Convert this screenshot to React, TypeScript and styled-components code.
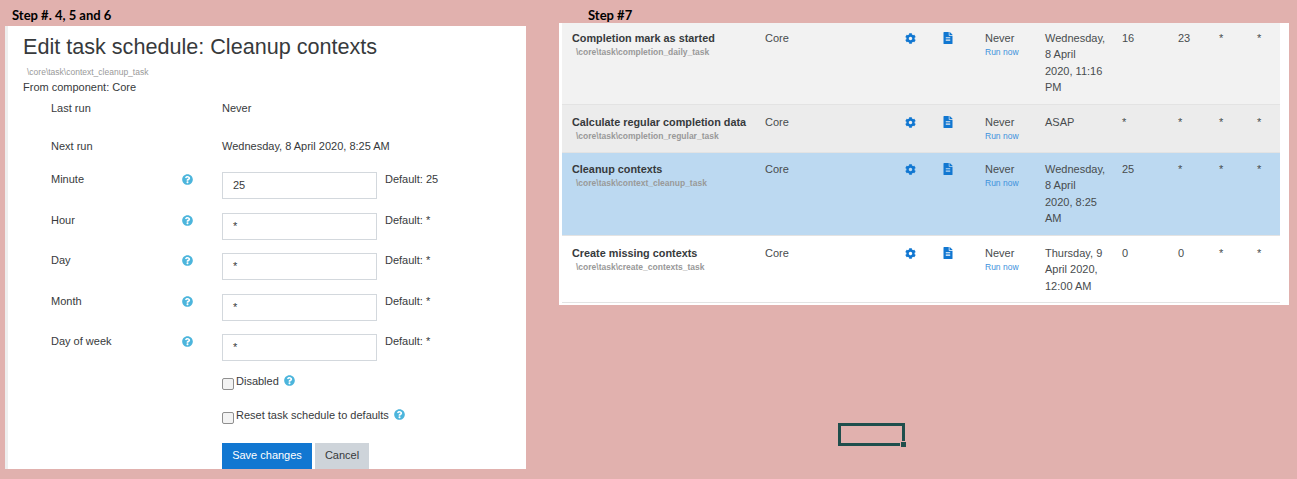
import React from 'react';
import { FaCog, FaFileAlt, FaQuestionCircle } from 'react-icons/fa';
import styled, { createGlobalStyle } from 'styled-components';

const GlobalStyle = createGlobalStyle`
  html, body {
    margin: 0;
    height: 479px;
    overflow: hidden;
    background: #e1b1ae;
    font-family: "Liberation Sans", Arial, sans-serif;
    font-size: 11px;
    color: #373a3c;
  }
`;

const Sheet = styled.div`
  position: relative;
  width: 1297px;
  height: 479px;
  display: flex;
  align-items: flex-start;
  padding-left: 5px;
  box-sizing: border-box;
  gap: 33px;
`;

const Column = styled.section<{ $width: number }>`
  width: ${(p) => p.$width}px;
  flex: none;
`;

const Caption = styled.div<{ $height: number; $indent: number }>`
  height: ${(p) => p.$height}px;
  padding-left: ${(p) => p.$indent}px;
  padding-top: 8px;
  box-sizing: border-box;
  font-family: Lato, "Open Sans", sans-serif;
  font-weight: 700;
  font-size: 13px;
  line-height: 15px;
  color: #000;
`;

const FormPanel = styled.div`
  height: 443px;
  overflow: hidden;
  background: #fff;
  border-left: 3px solid #eeeeee;
  padding-left: 15px;
  box-sizing: border-box;
`;

const Title = styled.h2`
  margin: 7px 0 0;
  font-size: 21.6px;
  line-height: 28px;
  font-weight: 400;
  color: #373a3c;
`;

const TaskPath = styled.div`
  margin: 5px 0 0 4px;
  font-size: 8.5px;
  line-height: 12px;
  color: #999;
`;

const Component = styled.div`
  line-height: 16px;
  margin-top: 1px;
`;

const StaticRow = styled.div<{ $height: number; $top?: number }>`
  display: grid;
  grid-template-columns: 171px 1fr;
  margin-left: 28px;
  height: ${(p) => p.$height}px;
  padding-top: ${(p) => p.$top ?? 0}px;
  box-sizing: border-box;
  line-height: 16px;
`;

const Fields = styled.div`
  display: flex;
  flex-direction: column;
  gap: 13.5px;
  margin-left: 28px;
`;

const FieldRow = styled.div`
  display: grid;
  grid-template-columns: 131px 40px 163px 1fr;
  height: 27px;
  line-height: 14px;
`;

const HelpCell = styled.span`
  padding-top: 2px;
  font-size: 11px;
  line-height: 0;
  color: #4cb5dc;
`;

const TextInput = styled.div`
  width: 155px;
  height: 27px;
  box-sizing: border-box;
  border: 1px solid #d3d8dd;
  background: #fff;
  padding: 4px 10px;
  line-height: 17px;
`;

const CheckRow = styled.label<{ $top: number }>`
  display: flex;
  align-items: flex-start;
  margin: ${(p) => p.$top}px 0 0 199px;
  height: 20px;
  line-height: 16px;
`;

const CheckBox = styled.span`
  flex: none;
  width: 12px;
  height: 12px;
  margin: 5px 2px 0 0;
  border: 1px solid #8f8f8f;
  border-radius: 2px;
  background: #f3f3f3;
  box-sizing: border-box;
`;

const InlineHelp = styled.span`
  margin: 2px 0 0 5px;
  font-size: 11px;
  line-height: 0;
  color: #4cb5dc;
`;

const Buttons = styled.div`
  display: flex;
  gap: 3px;
  margin: 16px 0 0 199px;
`;

const Button = styled.button<{ $primary?: boolean }>`
  height: 27px;
  border: 0;
  padding: 0 0 3px;
  width: ${(p) => (p.$primary ? 90 : 54)}px;
  font-family: inherit;
  font-size: 11px;
  background: ${(p) => (p.$primary ? '#1177d1' : '#ced4da')};
  color: ${(p) => (p.$primary ? '#fff' : '#373a3c')};
`;

const TablePanel = styled.div`
  height: 282px;
  background: #fff;
  padding-left: 3px;
  padding-right: 9px;
  box-sizing: border-box;
`;

const TaskRow = styled.div<{ $height: number; $top: number; $bg: string }>`
  display: grid;
  grid-template-columns: 193px 140px 37px 43px 60px 77px 56px 41px 38px 1fr;
  align-items: start;
  height: ${(p) => p.$height}px;
  padding: ${(p) => p.$top}px 0 0 10px;
  box-sizing: border-box;
  background: ${(p) => p.$bg};
  border-bottom: 1px solid #e3e3e3;
  line-height: 16.4px;
  color: #484c4e;
`;

const TaskName = styled.div`
  font-size: 10.85px;
  font-weight: 700;
  color: #373a3c;
`;

const TaskClass = styled.div`
  margin: 0 0 0 4px;
  font-size: 8.5px;
  font-weight: 700;
  line-height: 12px;
  color: #999;
`;

const IconCell = styled.span<{ $size: number; $top: number }>`
  font-size: ${(p) => p.$size}px;
  line-height: 0;
  padding-top: ${(p) => p.$top}px;
  color: #1177d1;
`;

const RunNow = styled.div`
  font-size: 8.5px;
  line-height: 12px;
  color: #3d92dc;
`;

const NextLine = styled.div`
  white-space: nowrap;
`;

const SelectedCell = styled.div`
  position: absolute;
  left: 838px;
  top: 423px;
  width: 67px;
  height: 23px;
  box-sizing: border-box;
  border: 3px solid #1f4e4c;

  &::after {
    content: '';
    position: absolute;
    right: -5px;
    bottom: -5px;
    width: 5px;
    height: 5px;
    background: #1f4e4c;
    border: 1px solid #e1b1ae;
  }
`;

const fields = [
  { label: 'Minute', value: '25', def: '25' },
  { label: 'Hour', value: '*', def: '*' },
  { label: 'Day', value: '*', def: '*' },
  { label: 'Month', value: '*', def: '*' },
  { label: 'Day of week', value: '*', def: '*' },
];

const tasks = [
  {
    name: 'Completion mark as started',
    path: '\\core\\task\\completion_daily_task',
    next: ['Wednesday,', '8 April', '2020, 11:16', 'PM'],
    cron: ['16', '23', '*', '*'],
    height: 82,
    top: 7,
    bg: '#f2f2f2',
  },
  {
    name: 'Calculate regular completion data',
    path: '\\core\\task\\completion_regular_task',
    next: ['ASAP'],
    cron: ['*', '*', '*', '*'],
    height: 48,
    top: 9,
    bg: '#ececec',
  },
  {
    name: 'Cleanup contexts',
    path: '\\core\\task\\context_cleanup_task',
    next: ['Wednesday,', '8 April', '2020, 8:25', 'AM'],
    cron: ['25', '*', '*', '*'],
    height: 83,
    top: 8,
    bg: '#bcd9f1',
  },
  {
    name: 'Create missing contexts',
    path: '\\core\\task\\create_contexts_task',
    next: ['Thursday, 9', 'April 2020,', '12:00 AM'],
    cron: ['0', '0', '*', '*'],
    height: 67,
    top: 9,
    bg: '#ffffff',
  },
];

export default function App() {
  return (
    <Sheet>
      <GlobalStyle />
      <Column $width={521}>
        <Caption $height={26} $indent={7}>
          Step #. 4, 5 and 6
        </Caption>
        <FormPanel>
          <Title>Edit task schedule: Cleanup contexts</Title>
          <TaskPath>\core\task\context_cleanup_task</TaskPath>
          <Component>From component: Core</Component>
          <StaticRow $height={43} $top={5}>
            <span>Last run</span>
            <span>Never</span>
          </StaticRow>
          <StaticRow $height={34}>
            <span>Next run</span>
            <span>Wednesday, 8 April 2020, 8:25 AM</span>
          </StaticRow>
          <Fields>
            {fields.map((f) => (
              <FieldRow key={f.label}>
                <span>{f.label}</span>
                <HelpCell>
                  <FaQuestionCircle />
                </HelpCell>
                <TextInput>{f.value}</TextInput>
                <span>Default: {f.def}</span>
              </FieldRow>
            ))}
          </Fields>
          <CheckRow $top={12}>
            <CheckBox />
            Disabled
            <InlineHelp>
              <FaQuestionCircle />
            </InlineHelp>
          </CheckRow>
          <CheckRow $top={14}>
            <CheckBox />
            Reset task schedule to defaults
            <InlineHelp>
              <FaQuestionCircle />
            </InlineHelp>
          </CheckRow>
          <Buttons>
            <Button $primary>Save changes</Button>
            <Button>Cancel</Button>
          </Buttons>
        </FormPanel>
      </Column>
      <Column $width={730}>
        <Caption $height={23} $indent={29}>
          Step #7
        </Caption>
        <TablePanel>
          {tasks.map((t) => (
            <TaskRow key={t.name} $height={t.height} $top={t.top} $bg={t.bg}>
              <div>
                <TaskName>{t.name}</TaskName>
                <TaskClass>{t.path}</TaskClass>
              </div>
              <span>Core</span>
              <IconCell $size={11} $top={3}>
                <FaCog />
              </IconCell>
              <IconCell $size={12} $top={2}>
                <FaFileAlt />
              </IconCell>
              <div>
                Never
                <RunNow>Run now</RunNow>
              </div>
              <div>
                {t.next.map((line) => (
                  <NextLine key={line}>{line}</NextLine>
                ))}
              </div>
              {t.cron.map((c, i) => (
                <span key={i}>{c}</span>
              ))}
            </TaskRow>
          ))}
        </TablePanel>
      </Column>
      <SelectedCell />
    </Sheet>
  );
}
